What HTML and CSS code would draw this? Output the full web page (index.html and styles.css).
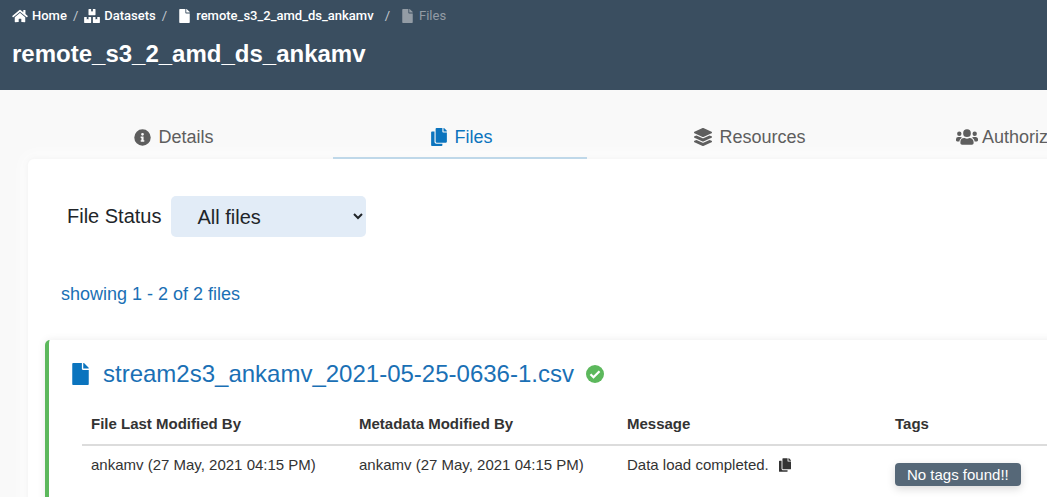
FILE: index.html
```html
<!DOCTYPE html>
<html lang="en">
<head>
<meta charset="utf-8">
<meta name="viewport" content="width=device-width, initial-scale=1">
<title>remote_s3_2_amd_ds_ankamv</title>
<link rel="stylesheet" href="styles.css">
</head>
<body>
<svg class="symbols" aria-hidden="true">
  <symbol id="file" viewBox="0 0 384 512"><path d="M224 136V0H24C10.700 0 0 10.700 0 24v464c0 13.300 10.700 24 24 24h336c13.300 0 24-10.700 24-24V160H248c-13.200 0-24-10.800-24-24zm160-14.100v6.100H256V0h6.100c6.400 0 12.500 2.500 17 7l97.900 98c4.500 4.500 7 10.600 7 16.900z"/></symbol>
  <symbol id="copy" viewBox="0 0 448 512"><path d="M320 448v40c0 13.255-10.745 24-24 24H24c-13.255 0-24-10.745-24-24V120c0-13.255 10.745-24 24-24h72v296c0 30.879 25.121 56 56 56h168zm0-344V0H152c-13.255 0-24 10.745-24 24v368c0 13.255 10.745 24 24 24h272c13.255 0 24-10.745 24-24V128H344c-13.200 0-24-10.800-24-24zm120.971-31.029L375.029 7.029A24 24 0 0 0 358.059 0H352v96h96v-6.059a24 24 0 0 0-7.029-16.970z"/></symbol>
</svg>
<header class="header">
  <nav class="crumbs" aria-label="Breadcrumb">
    <a class="crumb" href="#"><svg class="crumb-icon" width="16" height="14" viewBox="0 0 576 512"><path d="M280.400 148.300L96 300.100V464a16 16 0 0 0 16 16l112-.3a16 16 0 0 0 16-16V368a16 16 0 0 1 16-16h64a16 16 0 0 1 16 16v95.600a16 16 0 0 0 16 16.100L464 480a16 16 0 0 0 16-16V300L295.700 148.300a12.200 12.200 0 0 0-15.300 0zM571.600 251.500L488 182.600V44a12 12 0 0 0-12-12h-56a12 12 0 0 0-12 12v72.600L318.500 43a48 48 0 0 0-61 0L4.300 251.500a12 12 0 0 0-1.600 16.900l25.500 31A12 12 0 0 0 45.200 301l235.200-193.700a12.200 12.200 0 0 1 15.300 0L530.900 301a12 12 0 0 0 16.900-1.600l25.500-31a12 12 0 0 0-1.700-16.900z"/></svg>Home</a>
    <span class="slash">/</span>
    <a class="crumb" href="#"><svg class="crumb-icon" width="16" height="14" viewBox="0 0 576 512"><path d="M560 288h-80v96l-32-21.300-32 21.300v-96h-80c-8.800 0-16 7.200-16 16v192c0 8.800 7.200 16 16 16h224c8.800 0 16-7.200 16-16V304c0-8.800-7.200-16-16-16zm-384-64h224c8.800 0 16-7.200 16-16V16c0-8.800-7.200-16-16-16h-80v96l-32-21.300L256 96V0h-80c-8.800 0-16 7.200-16 16v192c0 8.800 7.200 16 16 16zm64 64h-80v96l-32-21.300L96 384v-96H16c-8.800 0-16 7.200-16 16v192c0 8.800 7.200 16 16 16h224c8.800 0 16-7.200 16-16V304c0-8.800-7.200-16-16-16z"/></svg>Datasets</a>
    <span class="slash">/</span>
    <a class="crumb crumb-file" href="#"><svg class="crumb-icon" width="11" height="14"><use href="#file"/></svg>remote_s3_2_amd_ds_ankamv</a>
    <span class="slash">/</span>
    <span class="crumb crumb-file crumb-current" aria-current="page"><svg class="crumb-icon" width="11" height="14"><use href="#file"/></svg>Files</span>
  </nav>
  <h1 class="title">remote_s3_2_amd_ds_ankamv</h1>
</header>
<main class="main">
  <nav class="tabs" aria-label="Dataset sections">
    <a class="tab" href="#"><svg width="17" height="17" viewBox="0 0 512 512"><path d="M256 8a248 248 0 1 0 0 496 248 248 0 0 0 0-496zm0 110a42 42 0 1 1 0 84 42 42 0 0 1 0-84zm56 254c0 6.600-5.400 12-12 12h-88c-6.600 0-12-5.400-12-12v-24c0-6.600 5.400-12 12-12h12v-64h-12c-6.600 0-12-5.400-12-12v-24c0-6.600 5.400-12 12-12h64c6.600 0 12 5.400 12 12v100h12c6.600 0 12 5.400 12 12z"/></svg>Details</a>
    <a class="tab tab-active" href="#" aria-current="page"><svg width="16" height="18"><use href="#copy"/></svg>Files</a>
    <a class="tab" href="#"><svg width="18" height="18" viewBox="0 0 512 512"><path d="M12.400 148l232.900 105.700c6.800 3.100 14.500 3.100 21.300 0L499.600 148c16.600-7.500 16.600-32.500 0-40L266.600 2.300a25.600 25.600 0 0 0-21.300 0L12.400 108c-16.600 7.500-16.600 32.500 0 40zm487.200 88.300l-58.100-26.300-161.600 73.300a57.600 57.600 0 0 1-47.800 0L70.500 210l-58.100 26.300c-16.600 7.500-16.600 32.500 0 40l232.900 105.600c6.800 3.100 14.500 3.100 21.300 0l233-105.600c16.600-7.500 16.600-32.500 0-40zm0 127.800l-57.900-26.200-161.800 73.400a57.600 57.600 0 0 1-47.800 0L70.300 337.900l-57.900 26.200c-16.600 7.500-16.600 32.500 0 40l232.900 105.600c6.800 3.100 14.500 3.100 21.300 0l233-105.600c16.600-7.500 16.600-32.500 0-40z"/></svg>Resources</a>
    <a class="tab tab-users" href="#"><svg width="22" height="18" viewBox="0 0 640 512"><path d="M96 224a64 64 0 1 0 0-128 64 64 0 0 0 0 128zm448 0a64 64 0 1 0 0-128 64 64 0 0 0 0 128zm32 32h-64c-17.600 0-33.500 7.100-45.100 18.600 40.300 22.100 68.900 62 75.100 109.400h66c17.700 0 32-14.300 32-32v-32c0-35.300-28.700-64-64-64zm-256 0a112 112 0 1 0 0-224 112 112 0 0 0 0 224zm76.800 32h-8.300a157 157 0 0 1-137 0h-8.300A115.200 115.200 0 0 0 128 403.200V432c0 26.500 21.500 48 48 48h288c26.500 0 48-21.500 48-48v-28.800c0-63.600-51.600-115.200-115.200-115.200zm-223.700-13.400A63.800 63.800 0 0 0 128 256H64a64 64 0 0 0-64 64v32c0 17.700 14.300 32 32 32h65.900c6.300-47.400 34.900-87.300 75.200-109.400z"/></svg>Authorized Users</a>
  </nav>
  <section class="panel">
    <form class="filter">
      <label for="status">File Status</label>
      <select class="select" id="status"><option>All files</option></select>
    </form>
    <p class="summary">showing 1 - 2 of 2 files</p>
    <article class="file-card">
      <h2 class="file-heading">
        <a class="file-link" href="#"><svg class="file-icon" width="17" height="22"><use href="#file"/></svg>stream2s3_ankamv_2021-05-25-0636-1.csv</a>
        <svg class="ok" width="18" height="18" viewBox="0 0 18 18" role="img" aria-label="Loaded"><circle cx="9" cy="9" r="9"/><path d="M4.500 9.200l3 3 6-6" fill="none" stroke="#fff" stroke-width="2.300"/></svg>
      </h2>
      <table class="table">
        <thead><tr><th>File Last Modified By</th><th>Metadata Modified By</th><th>Message</th><th>Tags</th></tr></thead>
        <tbody><tr>
          <td>ankamv (27 May, 2021 04:15 PM)</td>
          <td>ankamv (27 May, 2021 04:15 PM)</td>
          <td><span class="message">Data load completed.<button class="copy" type="button" aria-label="Copy message"><svg width="12" height="14"><use href="#copy"/></svg></button></span></td>
          <td><span class="badge">No tags found!!</span></td>
        </tr></tbody>
      </table>
    </article>
  </section>
</main>
</body>
</html>
```
FILE: styles.css
```css
* { box-sizing: border-box; }

body {
  margin: 0;
  min-height: 100vh;
  overflow: hidden;
  background: #f9f9f9;
  color: #212529;
  font-family: "Liberation Sans", Arial, sans-serif;
}

a { color: inherit; text-decoration: none; }
svg { fill: currentColor; flex: none; }
.symbols { display: none; }

.header {
  padding: 8px 12px 22px;
  background: #3a4e60;
  color: #fff;
}

.crumbs {
  display: flex;
  align-items: center;
  gap: 6px;
  font: 500 13px/16px Roboto, sans-serif;
}

.crumb { display: flex; align-items: center; gap: 4px; }
.crumb-file { gap: 6px; padding: 0 5px 0 6px; }
.crumb-current { color: #939ca5; font-weight: 400; }
.slash { color: #c4cad0; font-weight: 400; }

.title {
  margin: 16px 0 0;
  font-size: 24px;
  line-height: 28px;
}

.main { padding: 24px 0 0 28px; }

.tabs {
  display: grid;
  grid-auto-flow: column;
  grid-auto-columns: 288px;
  height: 45px;
}

.tab {
  position: relative;
  z-index: 1;
  display: flex;
  align-items: center;
  justify-content: center;
  gap: 7px;
  margin: 0 17px;
  padding: 3px 0 0 4px;
  border-bottom: 2px solid transparent;
  color: #5e5e5e;
  font-size: 18px;
}

.tab-users { gap: 4px; white-space: nowrap; }
.tab-active { border-color: #bfd8e9; color: #0b74be; }

.panel {
  min-width: 1152px;
  min-height: 400px;
  padding: 37px 17px 0;
  border-radius: 6px;
  background: #fff;
  box-shadow: 0 0 7px rgba(0, 0, 0, 0.06), 0 0 16px 4px #fff;
}

.filter {
  display: flex;
  align-items: center;
  gap: 10px;
  padding-left: 22px;
  font-size: 20px;
}

.select {
  width: 195px;
  height: 41px;
  padding: 0 0 0 22px;
  border: 0;
  border-radius: 5px;
  background: #e2ecf7;
  color: #212529;
  font: inherit;
}

.summary {
  margin: 46px 0 35px;
  padding-left: 16px;
  color: #1a70b5;
  font-size: 18px;
  line-height: 22px;
}

.file-card {
  min-height: 240px;
  padding: 18px 16px 0 33px;
  border-left: 4px solid #5cb85c;
  border-radius: 5px;
  box-shadow: 0 0 8px rgba(0, 0, 0, 0.08);
}

.file-heading {
  display: flex;
  align-items: center;
  gap: 12px;
  margin: 0 0 0 -10px;
  color: #1a70b5;
  font-size: 24px;
  font-weight: 400;
  line-height: 32px;
}

.file-link { display: flex; align-items: center; gap: 14px; }
.file-icon { color: #0b74be; }
.ok { color: #5cb85c; }

.table {
  width: 1072px;
  margin-top: 14px;
  border-collapse: collapse;
  table-layout: fixed;
  color: #333;
  font-size: 15px;
  line-height: 20px;
  text-align: left;
}

.table th { padding: 10px 9px; border-bottom: 2px solid #dcdcdc; }
.table td { padding: 9px; vertical-align: top; }

.message { display: flex; align-items: center; gap: 10px; }

.copy {
  display: flex;
  padding: 0;
  border: 0;
  background: none;
  color: #333;
}

.badge {
  display: inline-block;
  margin-top: 8px;
  padding: 0 12px;
  border-radius: 4px;
  background: #566878;
  box-shadow: 0 3px 8px rgba(0, 0, 0, 0.15);
  color: #fff;
  line-height: 23px;
}
```
